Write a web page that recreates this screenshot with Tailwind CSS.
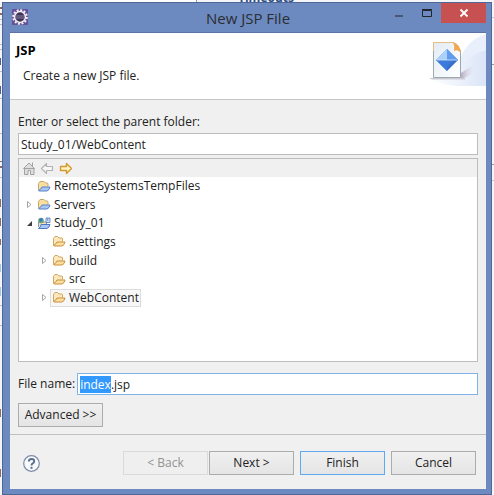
<!DOCTYPE html>
<html lang="en">
  <head>
    <meta charset="UTF-8" />
    <meta name="viewport" content="width=device-width, initial-scale=1.0" />
    <title>New JSP File</title>
    <script src="https://cdn.jsdelivr.net/npm/@tailwindcss/browser@4"></script>
  </head>
  <body class="relative flex min-h-screen flex-col overflow-hidden bg-[#f4f5f8] font-['Open_Sans',sans-serif] text-[12px] leading-4 text-[#222]">
    <!-- Editor page behind the dialog -->
    <div class="absolute inset-0 overflow-hidden" aria-hidden="true">
      <div class="absolute top-0 left-0 h-0.5 w-[197px] border-r border-[#999] bg-white"></div>
      <div class="absolute -top-[10px] left-[238px] text-[12px] font-bold text-[#2d4f86]">Timeouts</div>
      <svg class="absolute top-0 left-0 h-[495px] w-0.5" viewBox="0 0 2 495">
        <path fill="#b9bdc4" d="M0 19h2v1H0zM0 24h2v1H0zM0 44h2v1H0zM0 49h2v1H0zM0 71h2v1H0zM0 98h2v1H0zM0 133h2v1H0zM0 177h2v1H0zM0 305h2v1H0zM0 325h2v1H0z" />
        <path fill="#8a6c62" d="M0 7h2v2H0zM0 13h2v2H0zM0 161h2v1H0zM0 166h2v2H0zM0 199h1v8H0zM0 218h1v8H0zM0 239h1v6H0zM0 409h1v8H0zM0 469h1v8H0z" />
        <path fill="#4a5d94" d="M0 58h1v7H0zM0 86h1v8H0z" />
        <path fill="#9fc6ea" d="M0 264h1v8H0zM0 287h1v9H0z" />
      </svg>
      <div class="absolute top-[17px] right-0 h-px w-1 bg-[#ccd]"></div>
      <div class="absolute top-16 right-0 h-px w-1 bg-[#999]"></div>
      <div class="absolute top-[164px] right-0 h-px w-1 bg-[#999]"></div>
      <div class="absolute top-[180px] right-0 h-px w-1 bg-[#ccd]"></div>
    </div>

    <!-- Dialog -->
    <main class="relative mt-0.5 mr-[2px] ml-0.5 flex flex-1 flex-col border border-[#4f6697] bg-[#6c8abf] px-[7px] pr-[5px] pb-[5px]">
      <header class="relative flex h-[29px] items-center justify-center">
        <svg class="absolute top-[6px] left-[2px] size-4" viewBox="0 0 16 16">
          <rect width="16" height="16" rx="1" fill="#65509a" />
          <circle cx="8" cy="8" r="6.8" fill="none" stroke="#f4f2f6" stroke-width="2" stroke-dasharray="2 1.56" />
          <circle cx="8" cy="8" r="5.4" fill="#3e3352" stroke="#f4f2f6" stroke-width="1.5" />
          <path fill="#8981a5" d="M4 6.5h8v1H4zM3.5 8.5h9v1h-9z" />
        </svg>
        <h1 class="text-[15px] leading-5 text-[#2b2d33]">New JSP File</h1>
        <div class="absolute top-0 right-0 flex items-start">
          <button class="flex h-5 w-6 items-center justify-center" aria-label="Minimize">
            <svg class="size-3" viewBox="0 0 12 12"><path fill="#4a5675" d="M2 8h8v2H2z" /></svg>
          </button>
          <button class="mr-2 flex h-[22px] w-[22px] items-center" aria-label="Maximize">
            <svg class="h-3 w-[22px]" viewBox="0 0 22 12"><path fill="none" stroke="#20242e" d="M11.500 2.500h9v6h-9zM11 1.500h10" /></svg>
          </button>
          <button class="flex h-5 w-[45px] items-center justify-center bg-[#c75050]" aria-label="Close">
            <svg class="size-3" viewBox="0 0 12 12"><path stroke="#fff" stroke-width="1.8" d="M2.500 2.500l7 7M9.500 2.500l-7 7" /></svg>
          </button>
        </div>
      </header>

      <div class="flex flex-1 flex-col border-t border-[#5c74a5] bg-[#f0f0f0]">
        <section class="flex h-[67px] justify-between border-b border-[#c6c6c6] bg-white">
          <div class="pt-[9px] pl-[6px]">
            <h2 class="text-[13px] leading-4 font-bold text-black">JSP</h2>
            <p class="mt-[10px] pl-[7px]">Create a new JSP file.</p>
          </div>
          <svg class="h-[53px] w-[62px]" viewBox="0 0 62 53">
            <defs>
              <linearGradient id="sky" x1="0" x2="1"><stop stop-color="#fff" /><stop offset="1" stop-color="#dbe5f8" /></linearGradient>
              <linearGradient id="paper" x1="0" y1="0" x2="1" y2="1"><stop stop-color="#e3ebf5" /><stop offset="1" stop-color="#fff" /></linearGradient>
              <linearGradient id="gem" x1="0" y1="0" x2="1" y2="1"><stop stop-color="#75aaf0" /><stop offset="1" stop-color="#1b55bd" /></linearGradient>
              <linearGradient id="shade" x1="0" x2="1"><stop stop-color="#b5acc4" /><stop offset="1" stop-color="#e6e5f3" stop-opacity="0" /></linearGradient>
            </defs>
            <path fill="url(#sky)" d="M62 1C50 6 41 17 36 32L5 46q15 7 30 7h27z" />
            <path fill="#e9effb" d="M62 17Q44 22 36 36V26Q43 7 62 1z" />
            <path fill="url(#shade)" d="M37 40l14-9v7q-5 5-14 8z" />
            <path fill="#ccc9d5" d="M5 45h36v1.500H8z" />
            <path fill="url(#paper)" stroke="#9aa9a9" d="M9.500 9.500h20l7 8v27h-27z" />
            <path fill="none" stroke="#e8be82" d="M9.500 18V9.500H30" />
            <path fill="#efaa51" d="M29 9q7 2 8 11-3-4-7-2 1-5-1-9z" />
            <path fill="url(#gem)" d="M23 16l11 11-11 11-11-11z" />
            <path fill="#aad0fb" d="M23 16l-11 11h11z" />
            <path fill="#609cec" d="M23 16l11 11H23z" />
            <path fill="#3c7bdc" d="M12 27h11v11z" />
            <path stroke="#d5e9ff" stroke-width=".8" d="M13 27h20" />
          </svg>
        </section>

        <form class="flex flex-1 flex-col">
          <div class="flex flex-1 flex-col px-2 pt-[14px] pb-[7px]">
            <label for="parentFolder">Enter or select the parent folder:</label>
            <input
              type="text"
              id="parentFolder"
              value="Study_01/WebContent"
              class="mt-[3px] h-[22px] border border-[#bcbcbc] bg-white px-[2px] outline-none"
            />

            <!-- Folder tree -->
            <div class="mt-[3px] flex min-h-[204px] flex-1 flex-col border border-[#bcbcbc] bg-white">
              <div class="flex h-[18px] items-center gap-[3px] bg-[#f0f0f0] pl-[3px]">
                <button type="button" aria-label="Home">
                  <svg class="size-[15px]" viewBox="0 0 15 15"><path fill="#dedede" stroke="#a2a2a2" d="M1.500 7.500l5.500-5.500 5.500 5.500zM2.500 7.500v6h3.500v-4h2.500v4h3.500v-6M10.500 1.500v4" /></svg>
                </button>
                <button type="button" aria-label="Back">
                  <svg class="size-[15px]" viewBox="0 0 15 15"><path fill="#f7f7f7" stroke="#b3b3b3" stroke-width="1.200" stroke-linejoin="round" d="M1.500 7.500l5-5v3h6v4h-6v3z" /></svg>
                </button>
                <button type="button" aria-label="Forward">
                  <svg class="size-[15px]" viewBox="0 0 15 15"><path fill="#fff3c8" stroke="#d09a2c" stroke-width="1.400" stroke-linejoin="round" d="M13.500 7.500l-5-5v3h-6v4h6v3z" /></svg>
                </button>
              </div>
              <svg class="hidden">
                <symbol id="closed" viewBox="0 0 7 9"><path fill="#fff" stroke="#a6a6a6" d="M1.500 1.500v6l3.500-3z" /></symbol>
                <symbol id="opened" viewBox="0 0 7 9"><path fill="#404040" d="M6 2v5H1z" /></symbol>
                <symbol id="project" viewBox="0 0 14 13">
                  <path fill="#f8dfa0" stroke="#c4a671" d="M1.500 10V3.500l1.500-2h4l1.500 1.500h1.500q1 0 1 1v2.500" />
                  <path fill="#a5c8f5" stroke="#5a80c4" stroke-linejoin="round" d="M1.500 10.500q2-.5 3.500-3.500h8q-.5 3-3 4H2z" />
                </symbol>
                <symbol id="web" viewBox="0 0 14 13">
                  <path fill="#f8e3ae" stroke="#7d93b8" d="M1.500 10V5h8v2" />
                  <path fill="#a5c8f5" stroke="#4f78c2" stroke-linejoin="round" d="M1.500 11.500q2-1 2.500-4h9q-.5 3-3 4H2z" />
                  <circle cx="4" cy="3.500" r="2.800" fill="#63a27a" />
                  <path fill="#3f78bd" d="M2 3l2-2 2 1-2 3z" />
                  <path fill="#d9e7f9" stroke="#4f78c2" stroke-width=".8" d="M9 1h4v4.500H9zM10.800 1v3" />
                </symbol>
                <symbol id="folder" viewBox="0 0 14 13">
                  <path fill="#fbe8bb" stroke="#d0a465" d="M1.500 10V3.500l1.500-2h2.500l1.500 1.500h2.500q1 0 1 1v2.500" />
                  <path fill="#fcdf9f" stroke="#c88f3e" stroke-linejoin="round" d="M1.500 10.500q2-.5 3.500-3.500h8q-.5 3-3 4H2z" />
                </symbol>
              </svg>
              <ul class="grid h-[130px] grid-rows-7 items-center pl-[7px]">
                <li class="flex items-center gap-[3px] pl-[11px]">
                  <svg class="h-[13px] w-[14px]"><use href="#project" /></svg>RemoteSystemsTempFiles
                </li>
                <li class="flex items-center gap-[3px]">
                  <svg class="mr-px h-[9px] w-[7px]"><use href="#closed" /></svg>
                  <svg class="h-[13px] w-[14px]"><use href="#project" /></svg>Servers
                </li>
                <li class="flex items-center gap-[3px]">
                  <svg class="mr-px h-[9px] w-[7px]"><use href="#opened" /></svg>
                  <svg class="h-[13px] w-[14px]"><use href="#web" /></svg>Study_01
                </li>
                <li class="flex items-center gap-[3px] pl-[26px]">
                  <svg class="h-[13px] w-[14px]"><use href="#folder" /></svg>.settings
                </li>
                <li class="flex items-center gap-[3px] pl-[15px]">
                  <svg class="mr-px h-[9px] w-[7px]"><use href="#closed" /></svg>
                  <svg class="h-[13px] w-[14px]"><use href="#folder" /></svg>build
                </li>
                <li class="flex items-center gap-[3px] pl-[26px]">
                  <svg class="h-[13px] w-[14px]"><use href="#folder" /></svg>src
                </li>
                <li class="flex items-center gap-[2px] pl-[15px]">
                  <svg class="h-[9px] w-[7px]"><use href="#closed" /></svg>
                  <span class="flex items-center gap-[3px] border border-[#dcdcdc] bg-[#f7f7f7] px-px">
                    <svg class="h-[13px] w-[14px]"><use href="#folder" /></svg>WebContent
                  </span>
                </li>
              </ul>
            </div>

            <div class="mt-[11px] flex items-center gap-[2px]">
              <label for="fileName">File name:</label>
              <input
                type="text"
                id="fileName"
                value="index.jsp"
                class="h-[22px] min-w-0 flex-1 border border-[#7eb4ea] bg-white px-[2px] outline-none selection:bg-[#3399ff] selection:text-white"
              />
            </div>
            <button
              type="button"
              class="mt-2 h-6 w-[85px] border border-[#acacac] bg-linear-to-b from-[#f0f0f0] to-[#e5e5e5]"
            >
              Advanced &gt;&gt;
            </button>
          </div>

          <!-- Wizard buttons -->
          <footer class="flex items-center border-t border-[#c0c0c0] pt-4 pr-[10px] pb-[14px] pl-3">
            <button type="button" class="mr-auto" aria-label="Help">
              <svg class="size-[19px]" viewBox="0 0 19 19">
                <circle cx="9.500" cy="9.500" r="7.800" fill="#f8f9fb" stroke="#7c8ca6" stroke-width="1.200" />
                <path fill="none" stroke="#596f91" stroke-width="1.900" d="M6.800 7.600q0-2.600 2.700-2.600t2.700 2.300q0 1.300-1.400 2.100T9.500 11.500" />
                <path fill="#596f91" d="M8.500 12.800h2v2h-2z" />
              </svg>
            </button>
            <button type="button" disabled class="h-6 w-[85px] border border-[#dadada] bg-[#efefef] text-[#929292]">
              &lt; Back
            </button>
            <button type="button" class="ml-px h-6 w-[85px] border border-[#acacac] bg-linear-to-b from-[#f0f0f0] to-[#e5e5e5]">
              Next &gt;
            </button>
            <button type="submit" class="ml-[6px] h-6 w-[85px] border border-[#5ea8f4] bg-linear-to-b from-[#f0f0f0] to-[#e5e5e5]">
              Finish
            </button>
            <button type="button" class="ml-[6px] h-6 w-[85px] border border-[#acacac] bg-linear-to-b from-[#f0f0f0] to-[#e5e5e5]">
              Cancel
            </button>
          </footer>
        </form>
      </div>
    </main>

    <script>
      // select the base name so typing keeps the extension
      const fileName = document.getElementById("fileName");
      fileName.focus();
      fileName.setSelectionRange(0, fileName.value.lastIndexOf("."));
    </script>
  </body>
</html>
